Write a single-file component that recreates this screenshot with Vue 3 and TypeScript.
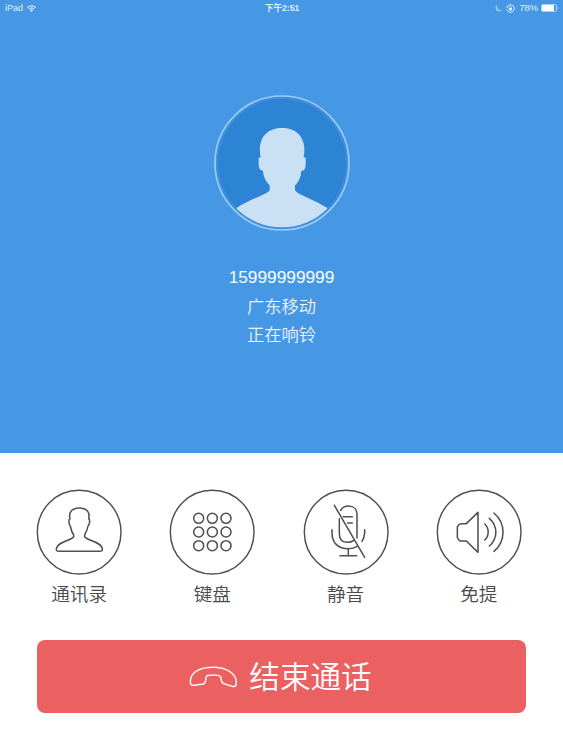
<script setup lang="ts">
interface Action {
  id: 'contacts' | 'keypad' | 'mute' | 'speaker'
  label: string
}

const actions: Action[] = [
  { id: 'contacts', label: '通讯录' },
  { id: 'keypad', label: '键盘' },
  { id: 'mute', label: '静音' },
  { id: 'speaker', label: '免提' },
]

const keyColumns: number[] = [108, 149, 190]
const keyRows: number[] = [103, 144, 185]
</script>

<template>
  <main class="screen">
    <section class="caller">
      <header class="status">
        <div class="status-left">
          <span>iPad</span>
          <svg class="wifi" viewBox="0 0 9 7" fill="none" stroke="currentColor" stroke-width="1.2">
            <path d="M.4 2.500Q4.500-1 8.600 2.500M1.900 4.100Q4.500 1.900 7.100 4.100" />
            <path d="M4.500 6.900L2.900 5.200Q4.500 3.900 6.100 5.200Z" fill="currentColor" stroke="none" />
          </svg>
        </div>
        <div class="status-time">下午2:51</div>
        <div class="status-right">
          <svg class="moon" viewBox="0 0 7 8" fill="currentColor">
            <path d="M2.200.6C-.8 3 .6 7.600 4 7.500Q5.800 7.400 6.800 6C3.500 6.600 1.300 4 2.200.6Z" />
          </svg>
          <svg class="lock" viewBox="0 0 9 9" fill="none" stroke="currentColor" stroke-width=".9">
            <path d="M1.200 2.600A3.800 3.800 0 1 1 .8 5.500M.3 2.200L1.100 3.400L2.500 2.700" />
            <path d="M3.600 4.200V3.300a.9.9 0 0 1 1.800 0V4.200" stroke-width=".7" />
            <rect x="2.900" y="4" width="3.200" height="2.400" fill="currentColor" stroke="none" />
          </svg>
          <span class="percent">78%</span>
          <svg class="battery" viewBox="0 0 18 8">
            <rect x=".5" y=".5" width="15" height="7" rx="1.200" fill="none" stroke="currentColor" stroke-width=".6" />
            <rect x="1" y="1" width="12" height="6" fill="#fff" />
            <path d="M16.500 2.700Q18 4 16.500 5.300Z" fill="currentColor" />
          </svg>
        </div>
      </header>

      <svg class="avatar" viewBox="0 0 450 450">
        <defs>
          <clipPath id="portrait"><circle cx="225" cy="225" r="193" /></clipPath>
        </defs>
        <circle cx="225" cy="225" r="201" fill="#3d90de" stroke="#9bcbf4" stroke-width="5" />
        <circle cx="225" cy="225" r="192" fill="#2e84d4" />
        <path
          clip-path="url(#portrait)"
          fill="#cae0f5"
          d="M161 208C150 150 180 120 225 120S301 150 290 208C297 206 297 213 296 224C296 240 294 248 283 248C282 267 276 280 264 292V306C268 319 315 331 361 360V430H89V360C132 331 183 319 188 306V292C177 280 169 267 168 248C157 248 155 239 155 223C154 212 155 206 161 208Z"
        />
      </svg>
      <div class="number">15999999999</div>
      <div class="info">广东移动</div>
      <div class="info">正在响铃</div>
    </section>

    <section class="controls">
      <div class="actions">
        <button v-for="action in actions" :key="action.id" class="action" type="button">
          <svg class="action-icon" viewBox="19 15 258 258">
            <circle cx="148.500" cy="144.500" r="125.500" stroke-width="4.300" />
            <path
              v-if="action.id === 'contacts'"
              d="M121 104C116 84 128 72 149 72S182 84 177 104C182 106 180 122 175 126C173 139 167 148 165 152V158C170 170 215 172 218 195Q219 202 210 202H88Q79 202 80 195C83 172 127 170 132 158V152C127 146 124 137 122 126C117 122 116 106 121 104Z"
            />
            <g v-else-if="action.id === 'keypad'">
              <template v-for="y in keyRows" :key="y">
                <circle v-for="x in keyColumns" :key="x" :cx="x" :cy="y" r="15" />
              </template>
            </g>
            <g v-else-if="action.id === 'mute'">
              <path d="M113 64L204 220M132 79C137 70 144 66 155 66C172 66 181 77 181 91V162M128 104V149C128 167 138 175 153 175Q164 175 170 170M140 98H167M153 117H167M106 137V147C106 177 125 194 155 194Q171 194 180 188M204 137V147Q203 161 196 172M155 194V215M130 215H180" />
            </g>
            <g v-else>
              <path d="M145 85V205L110 171H94Q90 171 87 167L83 161V129L87 123Q90 119 94 119H110ZM165 120C179 132 179 156 165 168M179 103C205 126 205 163 179 186M193 87C229 118 229 171 193 202" />
            </g>
          </svg>
          <span class="action-label">{{ action.label }}</span>
        </button>
      </div>

      <button class="hangup" type="button">
        <svg class="handset" viewBox="27 44 150 72">
          <path d="M31 92C32 65 59 51 99 51C139 51 168 69 169 96Q170 111 156 108L134 101Q125 98 124 90L122 80Q120 74 99 74T79 79L76 94Q75 101 66 102L43 105Q30 106 31 92Z" />
        </svg>
        <span>结束通话</span>
      </button>
    </section>
  </main>
</template>

<style>
body {
  margin: 0;
  background: #fff;
}
</style>

<style scoped>
.screen {
  width: 563px;
  height: 750px;
  display: flex;
  flex-direction: column;
  overflow: hidden;
  background: #fff;
  font-family: "Liberation Sans", "Noto Sans CJK SC DemiLight", "Noto Sans CJK SC", sans-serif;
}

.caller {
  height: 453px;
  flex: none;
  display: flex;
  flex-direction: column;
  align-items: center;
  background: #4698e5;
  color: #f8fcff;
}

.status {
  width: 100%;
  height: 16px;
  box-sizing: border-box;
  padding: 0 4px 0 5px;
  display: grid;
  grid-template-columns: 1fr auto 1fr;
  align-items: center;
  font-size: 9px;
  line-height: 16px;
  color: #e3f0fc;
}

.status-left,
.status-right {
  display: flex;
  align-items: center;
}

.status-left {
  gap: 4px;
}

.status-right {
  justify-content: flex-end;
}

.status-time {
  font-family: "Liberation Sans", "Noto Sans CJK SC", sans-serif;
  font-weight: 700;
  font-size: 8.6px;
}

.wifi {
  width: 9px;
  height: 7px;
}

.moon {
  width: 7px;
  height: 8px;
  margin-right: 4px;
  opacity: 0.5;
}

.lock {
  width: 9px;
  height: 9px;
  margin-right: 4px;
}

.percent {
  margin-right: 3px;
  font-size: 9.3px;
}

.battery {
  width: 18px;
  height: 8px;
}

.avatar {
  width: 150px;
  height: 150px;
  margin-top: 72px;
  flex: none;
}

.number,
.info {
  font-size: 17.3px;
  line-height: 28px;
}

.number {
  margin-top: 25px;
}

.info {
  color: #e8f4fe;
  font-weight: 350;
}

.number + .info {
  margin-top: 2px;
}

.controls {
  flex: 1;
  display: flex;
  flex-direction: column;
  align-items: center;
  padding-top: 36px;
}

.actions {
  width: 533px;
  display: grid;
  grid-template-columns: repeat(4, 1fr);
  margin-right: 5px;
}

button {
  border: 0;
  padding: 0;
  background: none;
  font-family: inherit;
}

.action {
  display: flex;
  flex-direction: column;
  align-items: center;
  color: #4b4b4b;
}

.action-icon {
  width: 86px;
  height: 86px;
  fill: none;
  stroke: #505050;
  stroke-width: 4.6;
  stroke-linecap: round;
  stroke-linejoin: round;
}

.action-label {
  margin-top: 6px;
  font-size: 18.6px;
  line-height: 28px;
  font-weight: 350;
}

.hangup {
  width: 489px;
  height: 73px;
  margin-top: 31px;
  box-sizing: border-box;
  padding-right: 2px;
  display: flex;
  align-items: center;
  justify-content: center;
  gap: 10px;
  border-radius: 8px;
  background: #eb6162;
  color: #fff;
  font-size: 30.6px;
  font-weight: 350;
  line-height: 44px;
}

.handset {
  width: 50px;
  height: 24px;
  fill: none;
  stroke: #fff2f1;
  stroke-width: 4.6;
  stroke-linejoin: round;
}
</style>
